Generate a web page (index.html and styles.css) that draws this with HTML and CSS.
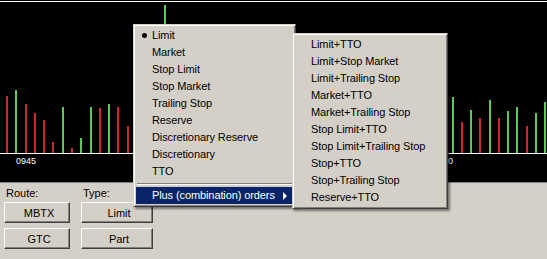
FILE: index.html
```html
<!DOCTYPE html>
<html lang="en">
<head>
    <meta charset="UTF-8">
    <title>Order Type Menu</title>
    <link rel="stylesheet" href="styles.css">
</head>
<body>

    <div class="chart">
        <div class="chart-top"></div>
        <div class="plot" id="plot"></div>
        <div class="axis-line"></div>
        <div class="axis-labels">
            <span class="tick tick-first">0945</span>
            <span class="tick tick-last">0</span>
        </div>
    </div>

    <div class="panel">
        <div class="labels">
            <div class="field-label route-label">Route:</div>
            <div class="field-label">Type:</div>
        </div>
        <div class="buttons">
            <div class="btn">MBTX</div>
            <div class="btn">Limit</div>
            <div class="btn">GTC</div>
            <div class="btn">Part</div>
        </div>
    </div>

    <!-- Order type popup menu -->
    <div class="menu main-menu">
        <div class="menu-item checked">Limit</div>
        <div class="menu-item">Market</div>
        <div class="menu-item">Stop Limit</div>
        <div class="menu-item">Stop Market</div>
        <div class="menu-item">Trailing Stop</div>
        <div class="menu-item">Reserve</div>
        <div class="menu-item">Discretionary Reserve</div>
        <div class="menu-item">Discretionary</div>
        <div class="menu-item">TTO</div>
        <div class="menu-sep"></div>
        <div class="menu-item active has-sub">Plus (combination) orders</div>
    </div>

    <!-- Combination submenu -->
    <div class="menu sub-menu">
        <div class="menu-item">Limit+TTO</div>
        <div class="menu-item">Limit+Stop Market</div>
        <div class="menu-item">Limit+Trailing Stop</div>
        <div class="menu-item">Market+TTO</div>
        <div class="menu-item">Market+Trailing Stop</div>
        <div class="menu-item">Stop Limit+TTO</div>
        <div class="menu-item">Stop Limit+Trailing Stop</div>
        <div class="menu-item">Stop+TTO</div>
        <div class="menu-item">Stop+Trailing Stop</div>
        <div class="menu-item">Reserve+TTO</div>
    </div>

    <script>
        // bar heights in px, g = up tick, r = down tick
        const bars = [
            [57, 'r'], [63, 'g'], [49, 'r'], [40, 'r'], [33, 'r'], [11, 'r'], [46, 'g'], [5, 'r'],
            [15, 'g'], [46, 'g'], [45, 'r'], [49, 'g'], [46, 'r'], [27, 'r'], [60, 'g'], [40, 'r'],
            [30, 'r'], [148, 'g'], [50, 'r'], [44, 'g'], [38, 'r'], [52, 'g'], [41, 'r'], [36, 'g'],
            [47, 'r'], [55, 'g'], [30, 'r'], [42, 'g'], [48, 'r'], [39, 'g'], [51, 'r'], [44, 'g'],
            [35, 'r'], [58, 'g'], [40, 'r'], [46, 'g'], [33, 'r'], [50, 'g'], [42, 'r'], [37, 'g'],
            [45, 'r'], [53, 'g'], [31, 'r'], [48, 'g'], [40, 'r'], [44, 'g'], [36, 'r'], [50, 'g'],
            [56, 'g'], [31, 'r'], [43, 'g'], [35, 'r'], [53, 'g'], [35, 'r'], [42, 'g'], [46, 'g'],
            [27, 'r'], [40, 'g'], [51, 'g']
        ];
        const plot = document.getElementById('plot');
        bars.forEach(function(b) {
            const bar = document.createElement('div');
            bar.className = 'bar ' + (b[1] === 'g' ? 'bar-up' : 'bar-down');
            bar.style.height = b[0] + 'px';
            plot.appendChild(bar);
        });
    </script>
</body>
</html>
```

FILE: styles.css
```css
body {
    margin: 0;
    width: 547px;
    height: 259px;
    overflow: hidden;
    background: #d4d0c8;
    font-family: 'Liberation Sans', Arial, sans-serif;
    font-size: 11px;
    color: #000;
    position: relative;
}

/* Chart */
.chart {
    background: #000;
    height: 182px;
    padding-top: 1px;
    box-sizing: border-box;
}
.chart-top {
    height: 1px;
    background: #fff;
}
.plot {
    height: 151px;
    display: flex;
    align-items: flex-end;
    gap: 7.29px;
    padding-left: 6px;
}
.bar {
    width: 2px;
    flex: none;
}
.bar-up {
    background: #5ec85e;
}
.bar-down {
    background: #c62a2a;
}
.axis-line {
    height: 1px;
    background: #fff;
}
.axis-labels {
    position: relative;
    height: 27px;
    color: #fff;
    font-size: 9px;
    line-height: 9px;
}
.tick {
    position: absolute;
    top: 3px;
}
.tick-first {
    left: 16px;
}
.tick-last {
    left: 448px;
}

/* Bottom panel */
.panel {
    border-top: 1px solid #808080;
    padding: 4px 0 0 4px;
}
.labels {
    display: flex;
    height: 15px;
    line-height: 13px;
}
.field-label {
    width: 77px;
}
.route-label {
    padding-left: 2px;
}
.buttons {
    display: grid;
    grid-template-columns: 66px 72px;
    grid-template-rows: 21px 21px;
    column-gap: 11px;
    row-gap: 5px;
}
.btn {
    background: #d4d0c8;
    border-top: 1px solid #fff;
    border-left: 1px solid #fff;
    border-right: 1px solid #404040;
    border-bottom: 1px solid #404040;
    box-shadow: inset -1px -1px 0 #808080;
    display: flex;
    align-items: center;
    justify-content: center;
    padding-left: 4px;
}

/* Popup menus */
.menu {
    position: absolute;
    background: #d4d0c8;
    border-top: 1px solid #d4d0c8;
    border-left: 1px solid #d4d0c8;
    border-right: 1px solid #404040;
    border-bottom: 1px solid #404040;
    box-shadow: inset 1px 1px 0 #fff, inset -1px -1px 0 #808080, 2px 2px 2px rgba(0, 0, 0, 0.45);
    padding: 2px;
    box-sizing: border-box;
    letter-spacing: -0.1px;
}
.main-menu {
    left: 133px;
    top: 24px;
    width: 163px;
}
.sub-menu {
    left: 292px;
    top: 33px;
    width: 156px;
}
.menu-item {
    height: 17px;
    line-height: 17px;
    padding-left: 16px;
    white-space: nowrap;
    position: relative;
}
.checked::before {
    content: "";
    position: absolute;
    left: 6px;
    top: 6px;
    width: 5px;
    height: 5px;
    border-radius: 50%;
    background: #000;
}
.menu-sep {
    height: 7px;
    display: flex;
    flex-direction: column;
    justify-content: center;
    padding: 0 1px;
}
.menu-sep::before {
    content: "";
    height: 1px;
    background: #808080;
    border-bottom: 1px solid #fff;
}
.active {
    background: #0a246a;
    color: #fff;
}
.has-sub::after {
    content: "";
    position: absolute;
    right: 6px;
    top: 5px;
    border-left: 4px solid #fff;
    border-top: 4px solid transparent;
    border-bottom: 4px solid transparent;
}
```
